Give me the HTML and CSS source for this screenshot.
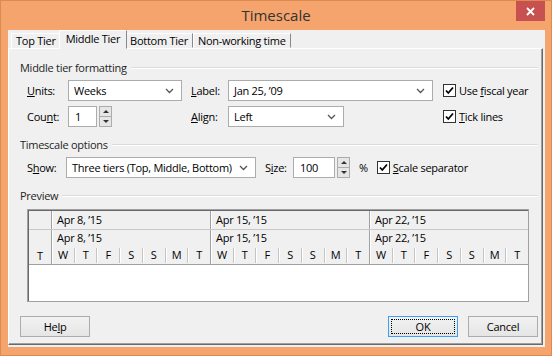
FILE: index.html
```html
<!DOCTYPE html>
<html lang="en">
<head>
    <meta charset="UTF-8">
    <meta name="viewport" content="width=device-width, initial-scale=1.0">
    <title>Timescale</title>
    <link rel="stylesheet" href="styles.css">
</head>
<body>
    <div class="window">
        <div class="titlebar">
            <span></span>
            <div class="title">Timescale</div>
            <div class="close-wrap">
                <div class="close">
                    <svg width="9" height="9" viewBox="0 0 9 9"><path d="M1 1L8 8M8 1L1 8" stroke="#fff" stroke-width="1.8"/></svg>
                </div>
            </div>
        </div>

        <div class="client">
            <div class="tabs">
                <div class="tab">Top Tier</div>
                <div class="tab active">Middle Tier</div>
                <div class="tab">Bottom Tier</div>
                <div class="tab">Non-working time</div>
            </div>

            <div class="panel">
                <div class="group-title"><span>Middle tier formatting</span></div>
                <div class="tier-grid">
                    <div class="lbl"><u>U</u>nits:</div>
                    <div class="combo w-units"><span>Weeks</span><svg width="9" height="6" viewBox="0 0 9 6"><path d="M1 1L4.5 4.5L8 1" fill="none" stroke="#555" stroke-width="1.3"/></svg></div>
                    <div class="lbl"><u>L</u>abel:</div>
                    <div class="combo w-label"><span>Jan 25, ’09</span><svg width="9" height="6" viewBox="0 0 9 6"><path d="M1 1L4.5 4.5L8 1" fill="none" stroke="#555" stroke-width="1.3"/></svg></div>
                    <label class="chk"><span class="box"><svg width="11" height="11" viewBox="0 0 11 11"><path d="M2 5.5L4.3 8L9 2.5" fill="none" stroke="#000" stroke-width="1.8"/></svg></span><span>Use <u>f</u>iscal year</span></label>

                    <div class="lbl">Cou<u>n</u>t:</div>
                    <div class="spin-field">
                        <div class="input w-count">1</div>
                        <div class="spin"><span class="up"></span><span class="down"></span></div>
                    </div>
                    <div class="lbl"><u>A</u>lign:</div>
                    <div class="combo w-align"><span>Left</span><svg width="9" height="6" viewBox="0 0 9 6"><path d="M1 1L4.5 4.5L8 1" fill="none" stroke="#555" stroke-width="1.3"/></svg></div>
                    <label class="chk"><span class="box"><svg width="11" height="11" viewBox="0 0 11 11"><path d="M2 5.5L4.3 8L9 2.5" fill="none" stroke="#000" stroke-width="1.8"/></svg></span><span><u>T</u>ick lines</span></label>
                </div>

                <div class="group-title"><span>Timescale options</span></div>
                <div class="options-row">
                    <div class="lbl w-show">S<u>h</u>ow:</div>
                    <div class="combo w-tiers"><span>Three tiers (Top, Middle, Bottom)</span><svg width="9" height="6" viewBox="0 0 9 6"><path d="M1 1L4.5 4.5L8 1" fill="none" stroke="#555" stroke-width="1.3"/></svg></div>
                    <div class="lbl w-size">S<u>i</u>ze:</div>
                    <div class="spin-field">
                        <div class="input w-pct">100</div>
                        <div class="spin"><span class="up"></span><span class="down"></span></div>
                    </div>
                    <div class="pct">%</div>
                    <label class="chk"><span class="box"><svg width="11" height="11" viewBox="0 0 11 11"><path d="M2 5.5L4.3 8L9 2.5" fill="none" stroke="#000" stroke-width="1.8"/></svg></span><span><u>S</u>cale separator</span></label>
                </div>

                <div class="group-title"><span>Preview</span></div>
                <div class="preview">
                    <div class="tier tier-top">
                        <div class="lead"></div>
                        <div class="week">Apr 8, ’15</div>
                        <div class="week">Apr 15, ’15</div>
                        <div class="week">Apr 22, ’15</div>
                    </div>
                    <div class="tier tier-mid">
                        <div class="lead"><span class="day">T</span></div>
                        <div class="week">
                            <div class="wk-label">Apr 8, ’15</div>
                            <div class="days"><span class="day">W</span><span class="day">T</span><span class="day">F</span><span class="day">S</span><span class="day">S</span><span class="day">M</span><span class="day">T</span></div>
                        </div>
                        <div class="week">
                            <div class="wk-label">Apr 15, ’15</div>
                            <div class="days"><span class="day">W</span><span class="day">T</span><span class="day">F</span><span class="day">S</span><span class="day">S</span><span class="day">M</span><span class="day">T</span></div>
                        </div>
                        <div class="week">
                            <div class="wk-label">Apr 22, ’15</div>
                            <div class="days"><span class="day">W</span><span class="day">T</span><span class="day">F</span><span class="day">S</span><span class="day">S</span><span class="day">M</span><span class="day">T</span></div>
                        </div>
                    </div>
                    <div class="blank"></div>
                </div>

                <div class="buttons">
                    <div class="btn">He<u>l</u>p</div>
                    <div class="btn default">OK</div>
                    <div class="btn">Cancel</div>
                </div>
            </div>
        </div>
    </div>
</body>
</html>
```

FILE: styles.css
```css
body {
    margin: 0;
    font-family: "Open Sans", "Noto Sans", sans-serif;
    font-size: 11px;
    letter-spacing: -0.27px; /* narrow it down to Segoe UI widths */
    color: #000;
}
.window {
    width: 552px;
    height: 356px;
    box-sizing: border-box;
    background-color: #f4a46c; /* Win8 orange frame */
    border: 1px solid #dd8a4e;
    display: flex;
    flex-direction: column;
}
.titlebar {
    height: 29px;
    display: grid;
    grid-template-columns: 1fr auto 1fr;
    align-items: start;
}
.title {
    font-size: 15px;
    letter-spacing: 0;
    color: #333;
    line-height: 29px;
}
.close-wrap {
    justify-self: end;
    margin-right: 6px;
}
.close {
    width: 29px;
    height: 20px;
    background-color: #c75050;
    display: flex;
    align-items: center;
    justify-content: center;
}
.client {
    margin-left: 7px;
    width: 537px;
    height: 317px;
    background-color: #f0f0f0;
}

/* Tabs */
.tabs {
    display: flex;
    align-items: flex-end;
    height: 18px;
    padding-left: 3px;
}
.tab {
    height: 15px;
    box-sizing: border-box;
    padding: 0 4px;
    line-height: 14px;
    border: 1px solid;
    border-color: #fff #8a8a8a transparent #fff;
    position: relative;
}
.tab.active {
    height: 19px;
    margin: 0 -2px -1px -2px;
    padding: 0 6px;
    line-height: 15px;
    background-color: #f0f0f0;
    z-index: 1;
}
.panel {
    width: 535px;
    height: 297px;
    box-sizing: border-box;
    border: 1px solid;
    border-color: #fff #696969 #696969 #fff;
    box-shadow: inset -1px -1px 0 #a0a0a0;
    padding: 11px 4px 0 11px;
}

/* Group headers */
.group-title {
    display: flex;
    align-items: center;
    gap: 4px;
    line-height: 16px;
    color: #1e1e1e;
}
.group-title::after {
    content: "";
    flex: 1;
    border-top: 1px solid #dcdcdc;
    border-bottom: 1px solid #fff;
}

.lbl {
    line-height: 21px;
}
.tier-grid {
    display: grid;
    grid-template-columns: 41px 123px 37px 215px auto;
    row-gap: 5px;
    margin: 4px 0 10px 7px;
    align-items: center;
}
.combo {
    height: 21px;
    box-sizing: border-box;
    border: 1px solid #acacac;
    background-color: #fff;
    display: flex;
    align-items: center;
    justify-content: space-between;
    padding: 0 7px 0 5px;
    white-space: nowrap;
}
.w-units { width: 114px; }
.w-label { width: 205px; }
.w-align { width: 116px; }
.w-tiers { width: 190px; }

.input {
    height: 21px;
    box-sizing: border-box;
    border: 1px solid #acacac;
    background-color: #fff;
    padding-left: 6px;
    line-height: 19px;
}
.w-count { width: 29px; }
.w-pct { width: 42px; }
.spin-field {
    display: flex;
    gap: 2px;
}
.spin {
    width: 13px;
    height: 21px;
    display: flex;
    flex-direction: column;
}
.spin span {
    flex: 1;
    border: 1px solid #acacac;
    background-color: #e6e6e6;
    display: flex;
    align-items: center;
    justify-content: center;
}
.spin .down {
    border-top: 0;
}
.spin .up::after {
    content: "";
    border: 3px solid transparent;
    border-bottom: 3px solid #333;
    border-top: 0;
}
.spin .down::after {
    content: "";
    border: 3px solid transparent;
    border-top: 3px solid #333;
    border-bottom: 0;
}

.chk {
    display: flex;
    align-items: center;
    gap: 3px;
    white-space: nowrap;
}
.box {
    width: 13px;
    height: 13px;
    box-sizing: border-box;
    border: 1px solid #333;
    background-color: #fff;
    display: flex;
    align-items: center;
    justify-content: center;
}

.options-row {
    display: flex;
    align-items: center;
    margin: 4px 0 10px 7px;
}
.w-show { width: 39px; }
.w-size { width: 28px; margin-left: 9px; }
.pct { margin: 0 9px 0 9px; }

/* Preview */
.preview {
    margin: 5px 0 0 7px;
    width: 502px;
    height: 93px;
    box-sizing: border-box;
    border: 1px solid #a0a0a0;
    box-shadow: inset 1px 1px 0 #696969;
    padding: 1px 0 0 1px;
    background-color: #fff;
    display: flex;
    flex-direction: column;
}
.tier {
    display: flex;
    background-color: #f0f0f0;
    border-bottom: 1px solid #c8c8c8;
}
.tier-top {
    height: 18px;
}
.tier-mid {
    height: 34px;
    border-bottom-color: #a0a0a0;
}
.lead {
    width: 22px;
    display: flex;
    align-items: flex-end;
    justify-content: center;
}
.week {
    flex: 1;
    border-left: 1px solid #a0a0a0;
    box-shadow: inset 1px 0 0 #fff;
    padding-left: 5px;
    line-height: 17px;
    display: flex;
    flex-direction: column;
}
.tier-mid .week {
    padding-left: 0;
}
.wk-label {
    padding-left: 5px;
    line-height: 16px;
}
.days {
    display: flex;
    flex: 1;
}
.day {
    flex: 1;
    height: 15px;
    line-height: 14px;
    text-align: center;
    margin-top: 2px;
}
.days .day + .day {
    border-left: 1px solid #c4c4c4;
    box-shadow: inset 1px 0 0 #fff;
}
.blank {
    flex: 1;
}

/* Buttons */
.buttons {
    display: flex;
    gap: 10px;
    margin-top: 14px;
}
.btn {
    width: 70px;
    height: 21px;
    box-sizing: border-box;
    border: 1px solid #acacac;
    background: linear-gradient(#f2f2f2, #e5e5e5);
    text-align: center;
    line-height: 19px;
}
.btn.default {
    margin-left: auto;
    border-color: #3c9ef8;
    outline: 1px dotted #000;
    outline-offset: -4px;
}
```
